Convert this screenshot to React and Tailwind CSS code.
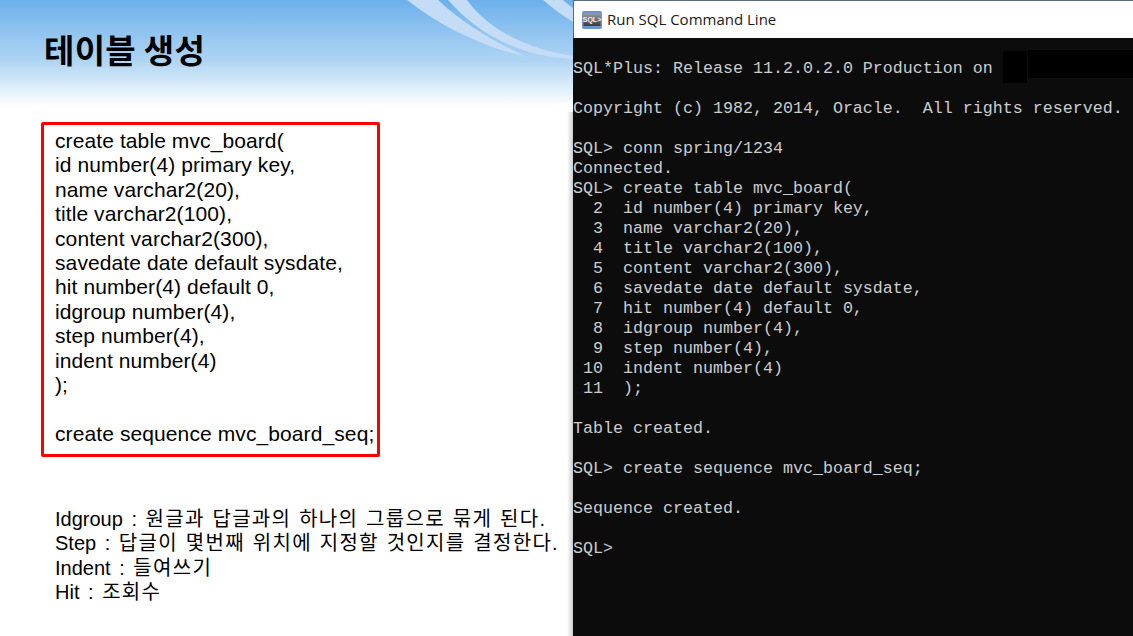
const sqlFont = "font-['Liberation_Mono','Noto_Sans_CJK_KR',monospace]";

const slideLines = [
  'create table mvc_board(',
  'id number(4) primary key,',
  'name varchar2(20),',
  'title varchar2(100),',
  'content varchar2(300),',
  'savedate date default sysdate,',
  'hit number(4) default 0,',
  'idgroup number(4),',
  'step number(4),',
  'indent number(4)',
  ');',
  '\u00a0',
  'create sequence mvc_board_seq;',
];

const notes = [
  { label: 'Idgroup', text: '원글과 답글과의 하나의 그룹으로 묶게 된다.' },
  { label: 'Step', text: '답글이 몇번째 위치에 지정할 것인지를 결정한다.' },
  { label: 'Indent', text: '들여쓰기' },
  { label: 'Hit', text: '조회수' },
];

const consoleLines = [
  'SQL*Plus: Release 11.2.0.2.0 Production on',
  '',
  'Copyright (c) 1982, 2014, Oracle.  All rights reserved.',
  '',
  'SQL> conn spring/1234',
  'Connected.',
  'SQL> create table mvc_board(',
  '  2  id number(4) primary key,',
  '  3  name varchar2(20),',
  '  4  title varchar2(100),',
  '  5  content varchar2(300),',
  '  6  savedate date default sysdate,',
  '  7  hit number(4) default 0,',
  '  8  idgroup number(4),',
  '  9  step number(4),',
  ' 10  indent number(4)',
  ' 11  );',
  '',
  'Table created.',
  '',
  'SQL> create sequence mvc_board_seq;',
  '',
  'Sequence created.',
  '',
  'SQL>',
];

function Swooshes() {
  return (
    <svg className="absolute left-0 top-0" width="573" height="70" viewBox="0 0 573 70">
      <path d="M407 0 C440 26 482 47 527 57 C495 42 465 25 438 0 Z" fill="#c5dcf6" />
      <path d="M448 0 C478 34 520 57 573 59 L573 56 C530 50 488 30 467 0 Z" fill="#c5dcf6" />
      <path d="M543 0 C552 8 562 15 573 22 L573 8 C569 5 566 3 563 0 Z" fill="#c5dcf6" />
    </svg>
  );
}

function SqlIcon() {
  return (
    <svg width="20" height="18" viewBox="0 0 20 18" className="shrink-0">
      <defs>
        <linearGradient id="sqlScreen" x1="0" y1="0" x2="0" y2="1">
          <stop offset="0" stopColor="#9a9da3" />
          <stop offset="1" stopColor="#3a3a3e" />
        </linearGradient>
      </defs>
      <rect x="0" y="0" width="20" height="18" rx="2" fill="#6f93d2" />
      <rect x="1.5" y="2" width="17" height="13" fill="url(#sqlScreen)" />
      <text x="10" y="10.5" textAnchor="middle" fontSize="7" fontWeight="700" fill="#f2f4f8" fontFamily="Liberation Sans">SQL&gt;</text>
    </svg>
  );
}

export default function App() {
  return (
    <div className="flex h-[636px] w-[1133px] overflow-hidden bg-white text-black font-['Liberation_Sans','Noto_Sans_CJK_KR',sans-serif]">
      <div className="relative w-[573px] shrink-0">
        <div className="relative h-[112px] bg-gradient-to-b from-[#6cb0ec] via-[#b0d5f3] via-55% to-white to-95%">
          <Swooshes />
          <h1 className="relative pl-[44px] pt-[27px] text-[33px] font-bold leading-[44px] tracking-[0.3px] font-['Noto_Sans_CJK_KR',sans-serif]">
            테이블 생성
          </h1>
        </div>

        <div className="ml-[41px] mt-[10px] h-[335px] w-[339px] rounded-[2px] border-[3px] border-[#ff0000] pl-[11px] pt-[4px]">
          {slideLines.map((line, i) => (
            <div key={i} className="text-[21px] leading-[24.4px] tracking-[0.1px] whitespace-pre">
              {line}
            </div>
          ))}
        </div>

        <div className="ml-[55px] mt-[50px]">
          {notes.map((note) => (
            <div key={note.label} className="text-[20px] leading-[24.4px] whitespace-pre [word-spacing:1px]">
              <span className="[word-spacing:3px]">{note.label} : </span>
              <span className="tracking-[1.3px]">{note.text}</span>
            </div>
          ))}
        </div>

        <div className="absolute right-0 top-[112px] bottom-0 w-[6px] bg-gradient-to-r from-transparent to-black/20" />
      </div>

      <div className="relative flex min-w-0 flex-1 flex-col">
        <div className="flex h-[38px] items-center gap-[5px] border-t border-l border-[#5a6b80] bg-white pl-[8px]">
          <SqlIcon />
          <span className="text-[15px] text-[#1a1a1a] font-['Open_Sans',sans-serif]">Run SQL Command Line</span>
        </div>
        <div className={`flex-1 bg-[#0c0c0c] pt-[21px] text-[16.67px] leading-[20px] text-[#cccccc] ${sqlFont}`}>
          {consoleLines.map((line, i) => (
            <div key={i} className="h-[20px] whitespace-pre">
              {line}
            </div>
          ))}
        </div>
        <div className="absolute left-[430px] top-[51px] h-[32px] w-[24px] bg-black" />
        <div className="absolute left-[455px] top-[50px] h-[28px] w-[105px] bg-black" />
      </div>
    </div>
  );
}
